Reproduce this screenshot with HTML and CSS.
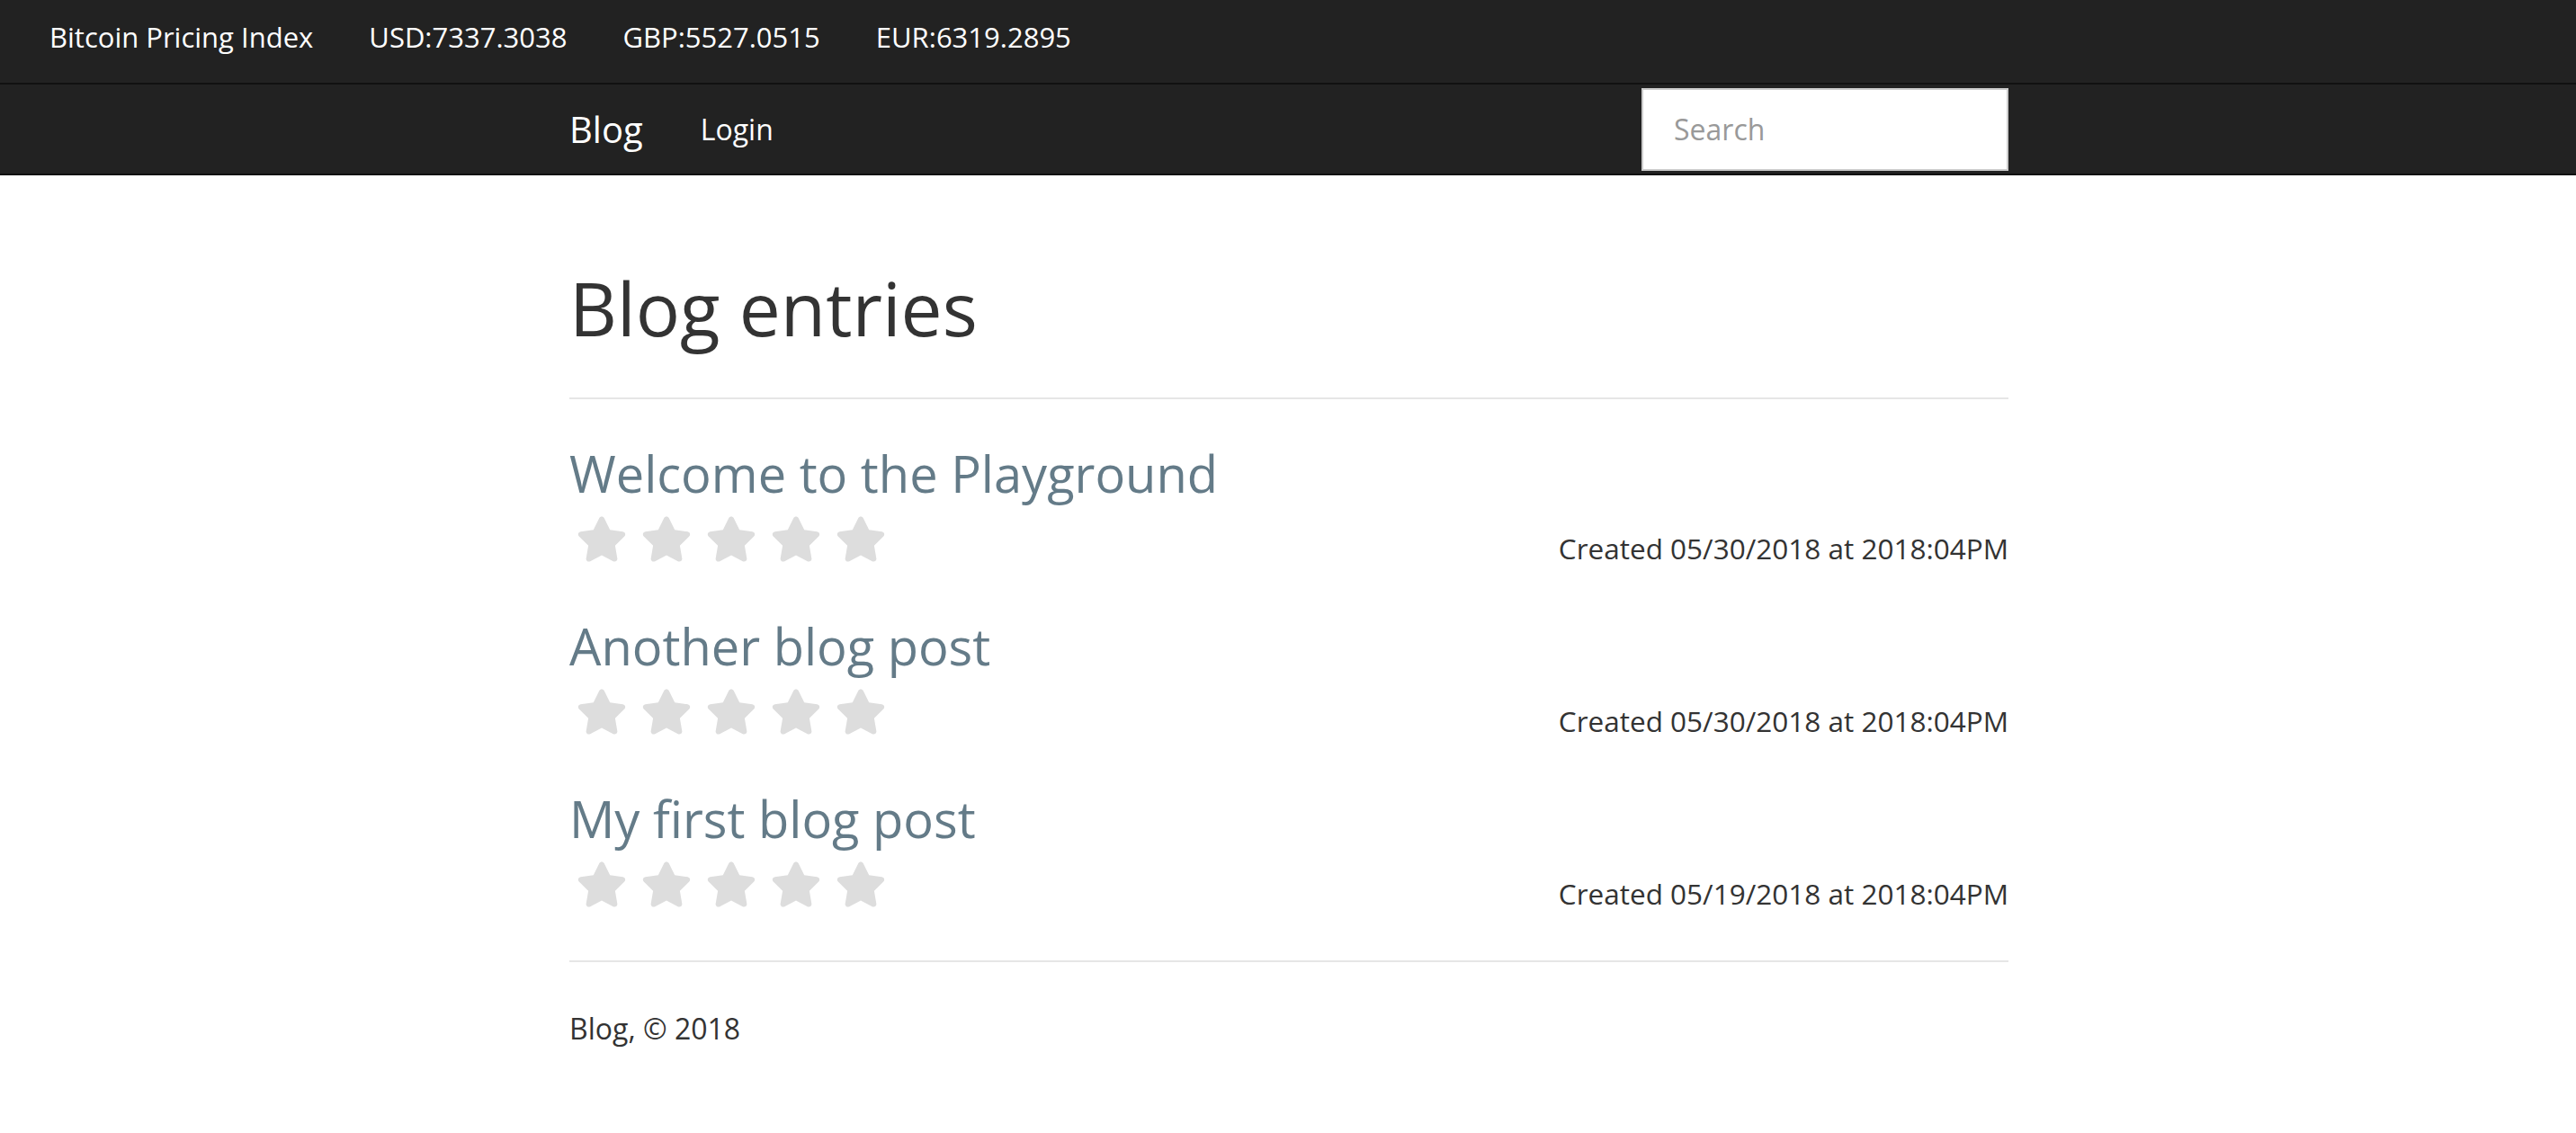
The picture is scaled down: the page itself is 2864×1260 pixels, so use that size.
FILE: index.html
```html
<!DOCTYPE html>
<html lang="en">
<head>
<meta charset="utf-8">
<title>Blog</title>
<link rel="stylesheet" href="styles.css">
</head>
<body>
<div class="ticker">
  <span class="ticker-item">Bitcoin Pricing Index</span>
  <span class="ticker-item">USD:7337.3038</span>
  <span class="ticker-item">GBP:5527.0515</span>
  <span class="ticker-item">EUR:6319.2895</span>
</div>
<nav class="navbar">
  <div class="container nav-inner">
    <a class="brand" href="#">Blog</a>
    <a class="nav-link" href="#">Login</a>
    <input class="search" type="text" placeholder="Search">
  </div>
</nav>
<main class="container">
  <div class="page-header">
    <h1>Blog entries</h1>
  </div>
  <div class="entries">
    <article class="entry">
      <h3 class="entry-title"><a href="#">Welcome to the Playground</a></h3>
      <div class="entry-meta">
        <div class="stars">
          <svg class="star" viewBox="12 0 552 512"><path d="M259.3 17.8L194 150.2 47.9 171.5c-26.2 3.8-36.7 36.1-17.7 54.6l105.7 103-25 145.5c-4.5 26.3 23.2 46 46.4 33.7L288 439.6l130.7 68.7c23.2 12.2 50.9-7.4 46.4-33.7l-25-145.5 105.7-103c19-18.5 8.5-50.8-17.7-54.6L382 150.2 316.7 17.8c-11.7-23.6-45.6-23.9-57.4 0z"/></svg>
          <svg class="star" viewBox="12 0 552 512"><path d="M259.3 17.8L194 150.2 47.9 171.5c-26.2 3.8-36.7 36.1-17.7 54.6l105.7 103-25 145.5c-4.5 26.3 23.2 46 46.4 33.7L288 439.6l130.7 68.7c23.2 12.2 50.9-7.4 46.4-33.7l-25-145.5 105.7-103c19-18.5 8.5-50.8-17.7-54.6L382 150.2 316.7 17.8c-11.7-23.6-45.6-23.9-57.4 0z"/></svg>
          <svg class="star" viewBox="12 0 552 512"><path d="M259.3 17.8L194 150.2 47.9 171.5c-26.2 3.8-36.7 36.1-17.7 54.6l105.7 103-25 145.5c-4.5 26.3 23.2 46 46.4 33.7L288 439.6l130.7 68.7c23.2 12.2 50.9-7.4 46.4-33.7l-25-145.5 105.7-103c19-18.5 8.5-50.8-17.7-54.6L382 150.2 316.7 17.8c-11.7-23.6-45.6-23.9-57.4 0z"/></svg>
          <svg class="star" viewBox="12 0 552 512"><path d="M259.3 17.8L194 150.2 47.9 171.5c-26.2 3.8-36.7 36.1-17.7 54.6l105.7 103-25 145.5c-4.5 26.3 23.2 46 46.4 33.7L288 439.6l130.7 68.7c23.2 12.2 50.9-7.4 46.4-33.7l-25-145.5 105.7-103c19-18.5 8.5-50.8-17.7-54.6L382 150.2 316.7 17.8c-11.7-23.6-45.6-23.9-57.4 0z"/></svg>
          <svg class="star" viewBox="12 0 552 512"><path d="M259.3 17.8L194 150.2 47.9 171.5c-26.2 3.8-36.7 36.1-17.7 54.6l105.7 103-25 145.5c-4.5 26.3 23.2 46 46.4 33.7L288 439.6l130.7 68.7c23.2 12.2 50.9-7.4 46.4-33.7l-25-145.5 105.7-103c19-18.5 8.5-50.8-17.7-54.6L382 150.2 316.7 17.8c-11.7-23.6-45.6-23.9-57.4 0z"/></svg>
        </div>
        <span class="created">Created 05/30/2018 at 2018:04PM</span>
      </div>
    </article>
    <article class="entry">
      <h3 class="entry-title"><a href="#">Another blog post</a></h3>
      <div class="entry-meta">
        <div class="stars">
          <svg class="star" viewBox="12 0 552 512"><path d="M259.3 17.8L194 150.2 47.9 171.5c-26.2 3.8-36.7 36.1-17.7 54.6l105.7 103-25 145.5c-4.5 26.3 23.2 46 46.4 33.7L288 439.6l130.7 68.7c23.2 12.2 50.9-7.4 46.4-33.7l-25-145.5 105.7-103c19-18.5 8.5-50.8-17.7-54.6L382 150.2 316.7 17.8c-11.7-23.6-45.6-23.9-57.4 0z"/></svg>
          <svg class="star" viewBox="12 0 552 512"><path d="M259.3 17.8L194 150.2 47.9 171.5c-26.2 3.8-36.7 36.1-17.7 54.6l105.7 103-25 145.5c-4.5 26.3 23.2 46 46.4 33.7L288 439.6l130.7 68.7c23.2 12.2 50.9-7.4 46.4-33.7l-25-145.5 105.7-103c19-18.5 8.5-50.8-17.7-54.6L382 150.2 316.7 17.8c-11.7-23.6-45.6-23.9-57.4 0z"/></svg>
          <svg class="star" viewBox="12 0 552 512"><path d="M259.3 17.8L194 150.2 47.9 171.5c-26.2 3.8-36.7 36.1-17.7 54.6l105.7 103-25 145.5c-4.5 26.3 23.2 46 46.4 33.7L288 439.6l130.7 68.7c23.2 12.2 50.9-7.4 46.4-33.7l-25-145.5 105.7-103c19-18.5 8.5-50.8-17.7-54.6L382 150.2 316.7 17.8c-11.7-23.6-45.6-23.9-57.4 0z"/></svg>
          <svg class="star" viewBox="12 0 552 512"><path d="M259.3 17.8L194 150.2 47.9 171.5c-26.2 3.8-36.7 36.1-17.7 54.6l105.7 103-25 145.5c-4.5 26.3 23.2 46 46.4 33.7L288 439.6l130.7 68.7c23.2 12.2 50.9-7.4 46.4-33.7l-25-145.5 105.7-103c19-18.5 8.5-50.8-17.7-54.6L382 150.2 316.7 17.8c-11.7-23.6-45.6-23.9-57.4 0z"/></svg>
          <svg class="star" viewBox="12 0 552 512"><path d="M259.3 17.8L194 150.2 47.9 171.5c-26.2 3.8-36.7 36.1-17.7 54.6l105.7 103-25 145.5c-4.5 26.3 23.2 46 46.4 33.7L288 439.6l130.7 68.7c23.2 12.2 50.9-7.4 46.4-33.7l-25-145.5 105.7-103c19-18.5 8.5-50.8-17.7-54.6L382 150.2 316.7 17.8c-11.7-23.6-45.6-23.9-57.4 0z"/></svg>
        </div>
        <span class="created">Created 05/30/2018 at 2018:04PM</span>
      </div>
    </article>
    <article class="entry">
      <h3 class="entry-title"><a href="#">My first blog post</a></h3>
      <div class="entry-meta">
        <div class="stars">
          <svg class="star" viewBox="12 0 552 512"><path d="M259.3 17.8L194 150.2 47.9 171.5c-26.2 3.8-36.7 36.1-17.7 54.6l105.7 103-25 145.5c-4.5 26.3 23.2 46 46.4 33.7L288 439.6l130.7 68.7c23.2 12.2 50.9-7.4 46.4-33.7l-25-145.5 105.7-103c19-18.5 8.5-50.8-17.7-54.6L382 150.2 316.7 17.8c-11.7-23.6-45.6-23.9-57.4 0z"/></svg>
          <svg class="star" viewBox="12 0 552 512"><path d="M259.3 17.8L194 150.2 47.9 171.5c-26.2 3.8-36.7 36.1-17.7 54.6l105.7 103-25 145.5c-4.5 26.3 23.2 46 46.4 33.7L288 439.6l130.7 68.7c23.2 12.2 50.9-7.4 46.4-33.7l-25-145.5 105.7-103c19-18.5 8.5-50.8-17.7-54.6L382 150.2 316.7 17.8c-11.7-23.6-45.6-23.9-57.4 0z"/></svg>
          <svg class="star" viewBox="12 0 552 512"><path d="M259.3 17.8L194 150.2 47.9 171.5c-26.2 3.8-36.7 36.1-17.7 54.6l105.7 103-25 145.5c-4.5 26.3 23.2 46 46.4 33.7L288 439.6l130.7 68.7c23.2 12.2 50.9-7.4 46.4-33.7l-25-145.5 105.7-103c19-18.5 8.5-50.8-17.7-54.6L382 150.2 316.7 17.8c-11.7-23.6-45.6-23.9-57.4 0z"/></svg>
          <svg class="star" viewBox="12 0 552 512"><path d="M259.3 17.8L194 150.2 47.9 171.5c-26.2 3.8-36.7 36.1-17.7 54.6l105.7 103-25 145.5c-4.5 26.3 23.2 46 46.4 33.7L288 439.6l130.7 68.7c23.2 12.2 50.9-7.4 46.4-33.7l-25-145.5 105.7-103c19-18.5 8.5-50.8-17.7-54.6L382 150.2 316.7 17.8c-11.7-23.6-45.6-23.9-57.4 0z"/></svg>
          <svg class="star" viewBox="12 0 552 512"><path d="M259.3 17.8L194 150.2 47.9 171.5c-26.2 3.8-36.7 36.1-17.7 54.6l105.7 103-25 145.5c-4.5 26.3 23.2 46 46.4 33.7L288 439.6l130.7 68.7c23.2 12.2 50.9-7.4 46.4-33.7l-25-145.5 105.7-103c19-18.5 8.5-50.8-17.7-54.6L382 150.2 316.7 17.8c-11.7-23.6-45.6-23.9-57.4 0z"/></svg>
        </div>
        <span class="created">Created 05/19/2018 at 2018:04PM</span>
      </div>
    </article>
  </div>
  <footer class="footer">Blog, © 2018</footer>
</main>
</body>
</html>
```
FILE: styles.css
```css
html, body {
  margin: 0;
  padding: 0;
  background: #fff;
}

body {
  font-family: "Open Sans", "Noto Sans", sans-serif;
  font-size: 32px;
  color: #333;
}

a {
  text-decoration: none;
}

.container {
  width: 1600px;
  margin: 0 auto;
  padding-left: 2px;
}

/* top price ticker */
.ticker {
  box-sizing: border-box;
  height: 94px;
  padding: 21px 0 0 55px;
  background: #222;
  border-bottom: 2px solid #111;
  display: flex;
  gap: 62px;
}

.ticker-item {
  color: #fff;
  font-size: 31px;
  line-height: 40px;
  white-space: nowrap;
}

/* main navbar */
.navbar {
  background: #222;
  border-bottom: 2px solid #111;
}

.nav-inner {
  height: 99px;
  display: flex;
  align-items: center;
}

.brand {
  color: #fff;
  font-size: 40px;
  line-height: 60px;
  margin-right: 64px;
}

.nav-link {
  color: #fff;
  font-size: 32px;
  line-height: 48px;
}

.search {
  box-sizing: border-box;
  margin-left: auto;
  width: 408px;
  height: 92px;
  border: 2px solid #ccc;
  padding: 0 34px;
  font-family: inherit;
  font-size: 32px;
  color: #555;
  background: #fff;
  outline: none;
}

.search::placeholder {
  color: #999;
}

/* content */
.page-header {
  padding: 99px 0 52px;
  border-bottom: 2px solid #e6e6e6;
}

.page-header h1 {
  margin: 0;
  font-size: 82px;
  font-weight: 400;
  line-height: 96px;
  color: #333;
}

.entries {
  padding: 49px 0 54px;
  border-bottom: 2px solid #e6e6e6;
  display: flex;
  flex-direction: column;
  gap: 55px;
}

.entry-title {
  margin: 0;
  font-size: 56px;
  font-weight: 400;
  line-height: 66px;
}

.entry-title a {
  color: #647b88;
}

.entry-meta {
  margin-top: 15px;
  display: flex;
  justify-content: space-between;
  align-items: flex-start;
}

.stars {
  display: flex;
  gap: 18px;
  padding-left: 9px;
}

.star {
  width: 54px;
  height: 51px;
  fill: #ddd;
  display: block;
}

.created {
  padding-top: 16px;
  font-size: 31.5px;
  line-height: 40px;
  color: #333;
}

.footer {
  padding-top: 50px;
  line-height: 48px;
  color: #333;
}
```
